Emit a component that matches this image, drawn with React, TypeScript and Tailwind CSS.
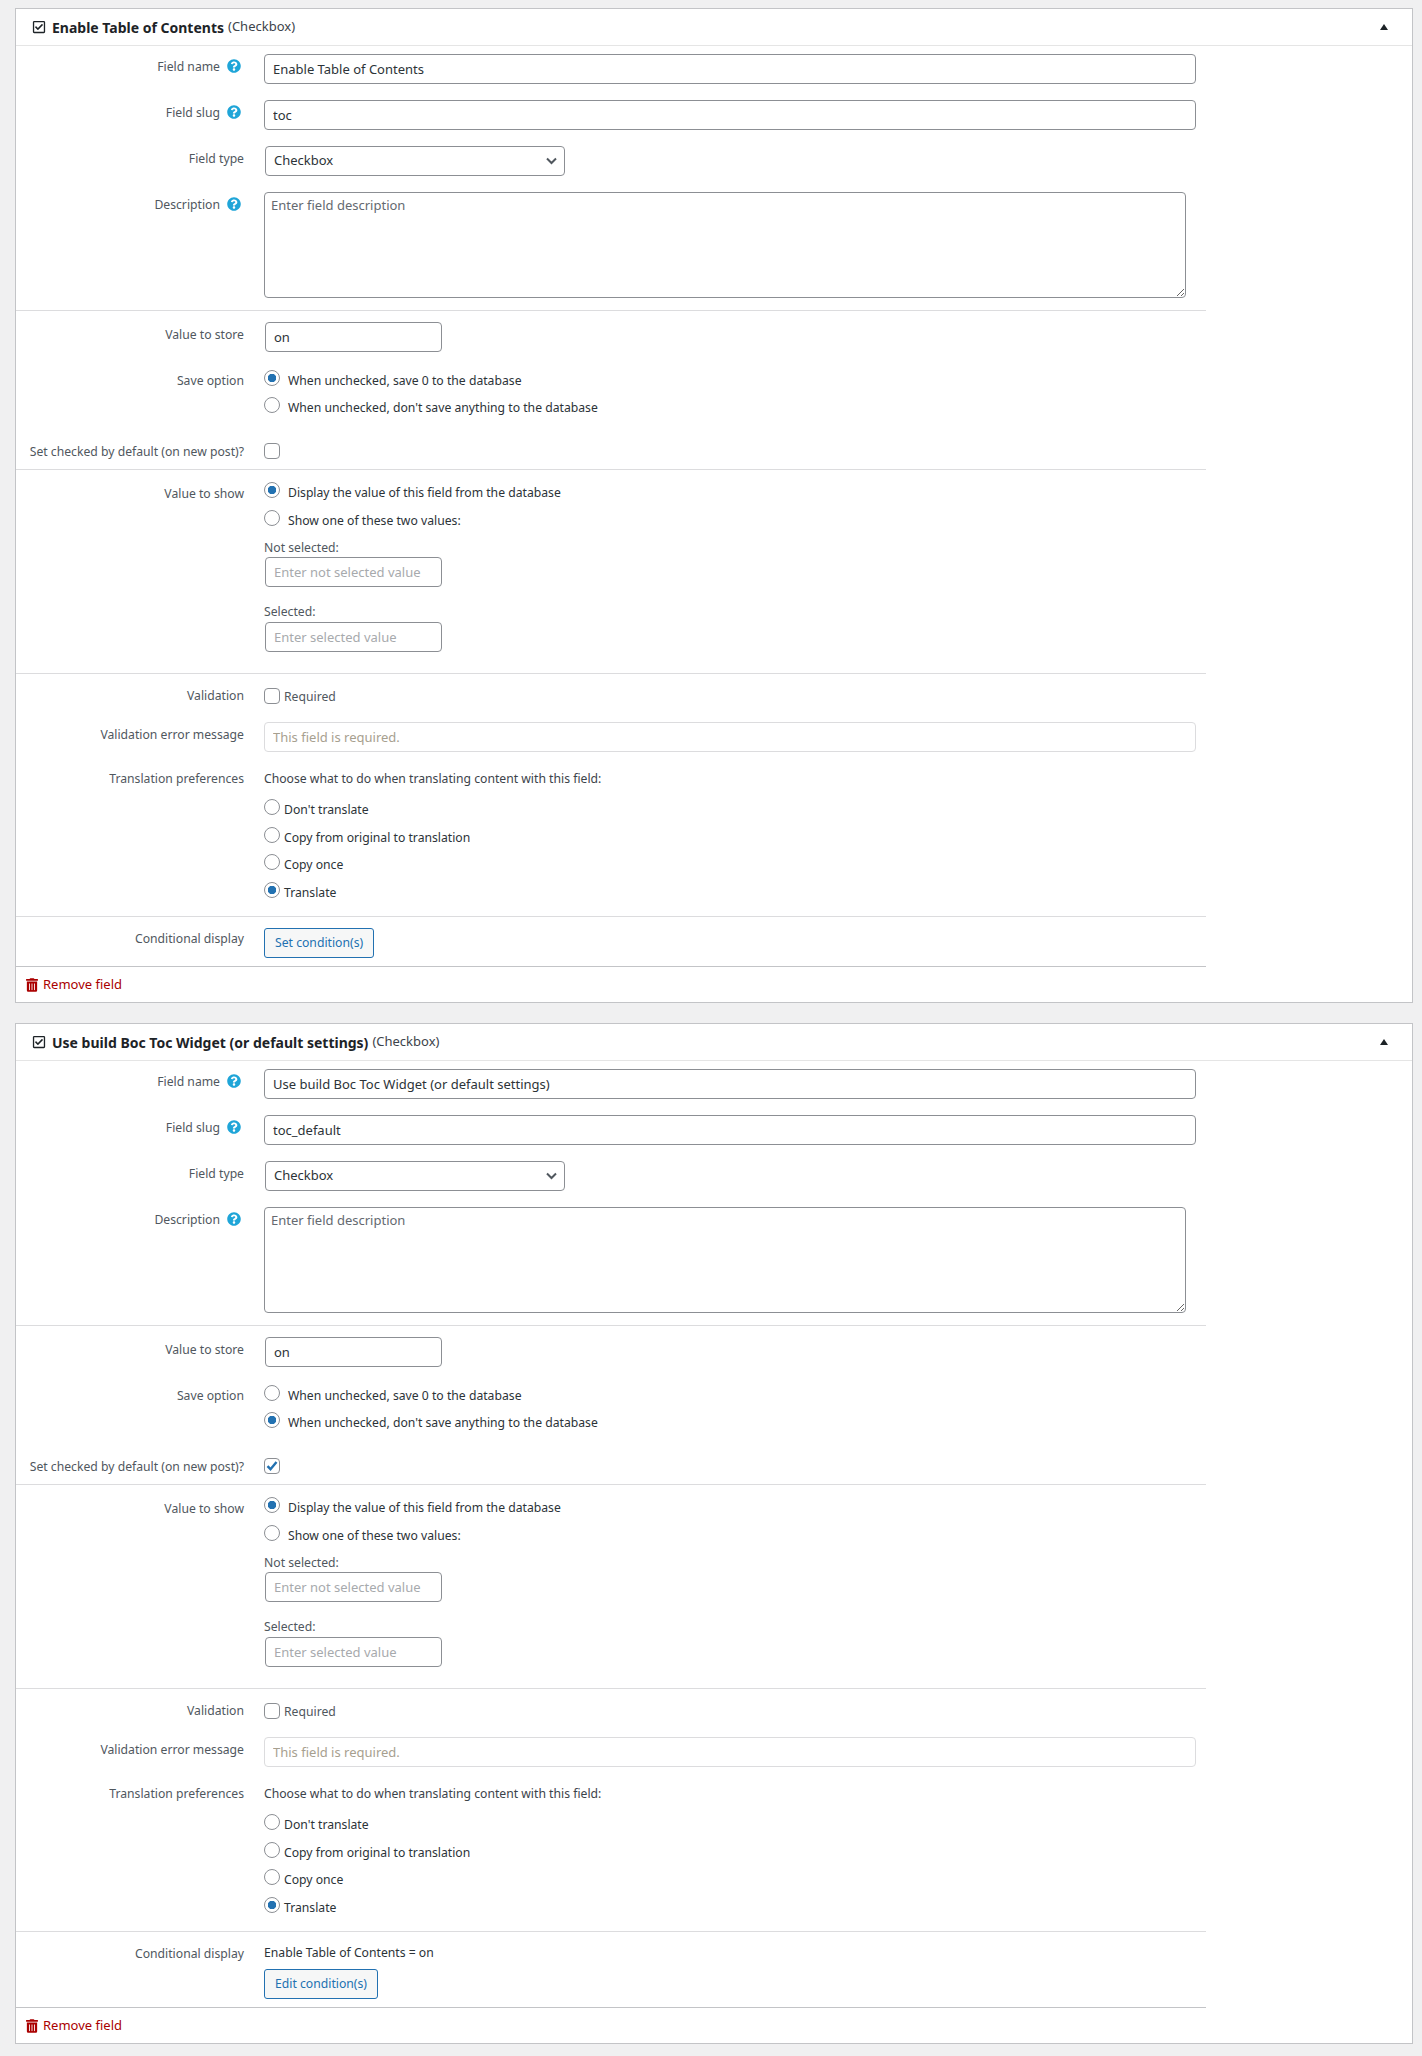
import { FaQuestionCircle, FaRegCheckSquare, FaTrashAlt } from 'react-icons/fa';
import type { ReactNode } from 'react';

const textInput = 'block h-[30px] rounded-[4px] border border-[#8c8f94] bg-white px-2 text-[13px] text-[#2c3338] outline-none';
const radioClass = 'm-0 h-4 w-4 shrink-0 appearance-none rounded-full border border-[#8c8f94] bg-white checked:bg-[radial-gradient(circle,#2271b1_0,#2271b1_4px,transparent_4.5px)]';

function Row({ label, help, labelClass, className, children }: {
  label: string;
  help?: boolean;
  labelClass?: string;
  className?: string;
  children: ReactNode;
}) {
  return (
    <div className={`flex ${className ?? ''}`}>
      <div className={`w-[228px] shrink-0 flex justify-end items-start whitespace-nowrap text-[#50575e] ${labelClass ?? ''}`}>
        <span className="mt-px leading-[18px]">{label}</span>
        {help && <FaQuestionCircle className="ml-[7px] mr-[3px] mt-[2px] h-[14px] w-[14px] text-[#1fa5d8]" />}
      </div>
      <div className="ml-5 flex-1">{children}</div>
    </div>
  );
}

function RadioLine({ name, label, checked, wide, className }: {
  name: string;
  label: string;
  checked?: boolean;
  wide?: boolean;
  className?: string;
}) {
  return (
    <label className={`flex items-start ${className ?? ''}`}>
      <input type="radio" name={name} defaultChecked={checked} className={radioClass} />
      <span className={`${wide ? 'ml-2' : 'ml-1'} mt-[2px] leading-[18px] text-[#2c3338]`}>{label}</span>
    </label>
  );
}

function FieldCard({ title, slug, saveZero, defaultOn, condition, id, className }: {
  title: string;
  slug: string;
  saveZero: boolean;
  defaultOn: boolean;
  condition?: string;
  id: string;
  className?: string;
}) {
  return (
    <section className={`border border-[#c3c4c7] bg-white ${className ?? ''}`}>
      <header className="flex h-[37px] items-center border-b border-[#e5e5e5] pl-4 pr-[24px]">
        <FaRegCheckSquare className="h-[14px] w-[14px] text-[#1d2327]" />
        <h2 className="ml-[6px] text-[14px] font-bold text-[#1d2327]">{title}</h2>
        <span className="ml-1 text-[13px] text-[#3c434a]">(Checkbox)</span>
        <svg className="ml-auto h-[6px] w-2" viewBox="0 0 8 6"><path d="M4 0l4 6H0z" fill="#1d2327" /></svg>
      </header>

      <div className="w-[1190px]">
        <div className="border-b border-[#dcdcde] pt-2 pb-3">
          <Row label="Field name" help labelClass="pt-[3px]">
            <input className={`${textInput} w-[932px]`} defaultValue={title} />
          </Row>
          <Row label="Field slug" help labelClass="pt-[3px]" className="mt-4">
            <input className={`${textInput} w-[932px]`} defaultValue={slug} />
          </Row>
          <Row label="Field type" labelClass="pt-[3px]" className="mt-4">
            <div className="relative ml-px w-[300px]">
              <select className={`${textInput} w-full appearance-none`} defaultValue="Checkbox">
                <option>Checkbox</option>
              </select>
              <svg className="pointer-events-none absolute right-[8px] top-[11px] h-2 w-[11px]" viewBox="0 0 11 8" fill="none" stroke="#50575e" strokeWidth="2"><path d="M1 1.5l4.5 4.5L10 1.5" /></svg>
            </div>
          </Row>
          <Row label="Description" help labelClass="pt-[3px]" className="mt-4">
            <textarea
              className="block h-[106px] w-[922px] rounded-[4px] border border-[#8c8f94] px-[6px] py-[2px] text-[13px] leading-[20px] text-[#2c3338] outline-none placeholder:text-[#646970]"
              placeholder="Enter field description"
            />
          </Row>
        </div>

        <div className="border-b border-[#dcdcde] pt-[11px] pb-2">
          <Row label="Value to store" labelClass="pt-[3px]">
            <input className={`${textInput} ml-px w-[177px]`} defaultValue="on" />
          </Row>
          <Row label="Save option" labelClass="pt-px" className="mt-[18px]">
            <RadioLine name={`${id}-save`} label="When unchecked, save 0 to the database" checked={saveZero} wide />
            <RadioLine name={`${id}-save`} label="When unchecked, don't save anything to the database" checked={!saveZero} wide className="mt-[7px]" />
          </Row>
          <Row label="Set checked by default (on new post)?" labelClass="-mt-px" className="mt-[26px]">
            <input type="checkbox" defaultChecked={defaultOn} className="m-0 block h-4 w-4 appearance-none rounded-[4px] border border-[#8c8f94] bg-white" />
            {defaultOn && (
              <svg className="pointer-events-none -mt-4 block h-4 w-4" viewBox="0 0 16 16" fill="none" stroke="#2271b1" strokeWidth="2.4"><path d="M3.5 8.2l3 3 6-7.2" /></svg>
            )}
          </Row>
        </div>

        <div className="border-b border-[#dcdcde] pt-3 pb-[21px]">
          <Row label="Value to show" labelClass="pt-[2px]">
            <RadioLine name={`${id}-show`} label="Display the value of this field from the database" checked wide />
            <RadioLine name={`${id}-show`} label="Show one of these two values:" wide className="mt-2" />
            <div className="mt-[9px] leading-[18px] text-[#50575e]">Not selected:</div>
            <input className={`${textInput} ml-px w-[177px] placeholder:text-[#a7aaad]`} placeholder="Enter not selected value" />
            <div className="mt-4 leading-[18px] text-[#50575e]">Selected:</div>
            <input className={`${textInput} ml-px mt-px w-[177px] placeholder:text-[#a7aaad]`} placeholder="Enter selected value" />
          </Row>
        </div>

        <div className="border-b border-[#dcdcde] pt-[14px] pb-[14px]">
          <Row label="Validation" labelClass="-mt-[2px]">
            <label className="flex items-start">
              <input type="checkbox" className="m-0 h-4 w-4 appearance-none rounded-[4px] border border-[#8c8f94] bg-white" />
              <span className="ml-1 leading-[18px] text-[#50575e]">Required</span>
            </label>
          </Row>
          <Row label="Validation error message" labelClass="pt-[3px]" className="mt-4">
            <input
              disabled
              className="block h-[30px] w-[932px] rounded-[4px] border border-[#dcdcde] bg-white px-2 text-[13px] outline-none placeholder:text-[#a7a08f]"
              placeholder="This field is required."
            />
          </Row>
          <Row label="Translation preferences" className="mt-[17px]">
            <p className="mt-px leading-[18px] text-[#3c434a]">Choose what to do when translating content with this field:</p>
            <RadioLine name={`${id}-wpml`} label="Don't translate" className="mt-[11px]" />
            <RadioLine name={`${id}-wpml`} label="Copy from original to translation" className="mt-2" />
            <RadioLine name={`${id}-wpml`} label="Copy once" className="mt-[7px]" />
            <RadioLine name={`${id}-wpml`} label="Translate" checked className="mt-2" />
          </Row>
        </div>

        <div className={`border-b border-[#c3c4c7] pb-2 ${condition ? 'pt-3' : 'pt-[11px]'}`}>
          <Row label="Conditional display" labelClass={condition ? '' : 'pt-px'}>
            {condition && <p className="mb-[6px] mt-px -translate-y-px leading-[18px] text-[#2c3338]">{condition}</p>}
            <button className="block h-[30px] rounded-[3px] border border-[#2271b1] bg-[#f6f7f7] px-[10px] text-[12.2px] text-[#2271b1]">
              {condition ? 'Edit condition(s)' : 'Set condition(s)'}
            </button>
          </Row>
        </div>
      </div>

      <div className="flex h-[35px] items-center pl-[10px] text-[13px] text-[#aa0000]">
        <FaTrashAlt className="mr-[5px] h-[14px] w-[12px]" />
        Remove field
      </div>
    </section>
  );
}

export default function App() {
  return (
    <div className="min-h-[2056px] bg-[#f0f0f1] pt-2 pl-[15px] pr-[9px] text-[12.2px] font-['Noto_Sans','Open_Sans',sans-serif]">
      <FieldCard id="toc" title="Enable Table of Contents" slug="toc" saveZero defaultOn={false} />
      <FieldCard
        id="toc-default"
        className="mt-5"
        title="Use build Boc Toc Widget (or default settings)"
        slug="toc_default"
        saveZero={false}
        defaultOn
        condition="Enable Table of Contents = on"
      />
    </div>
  );
}
